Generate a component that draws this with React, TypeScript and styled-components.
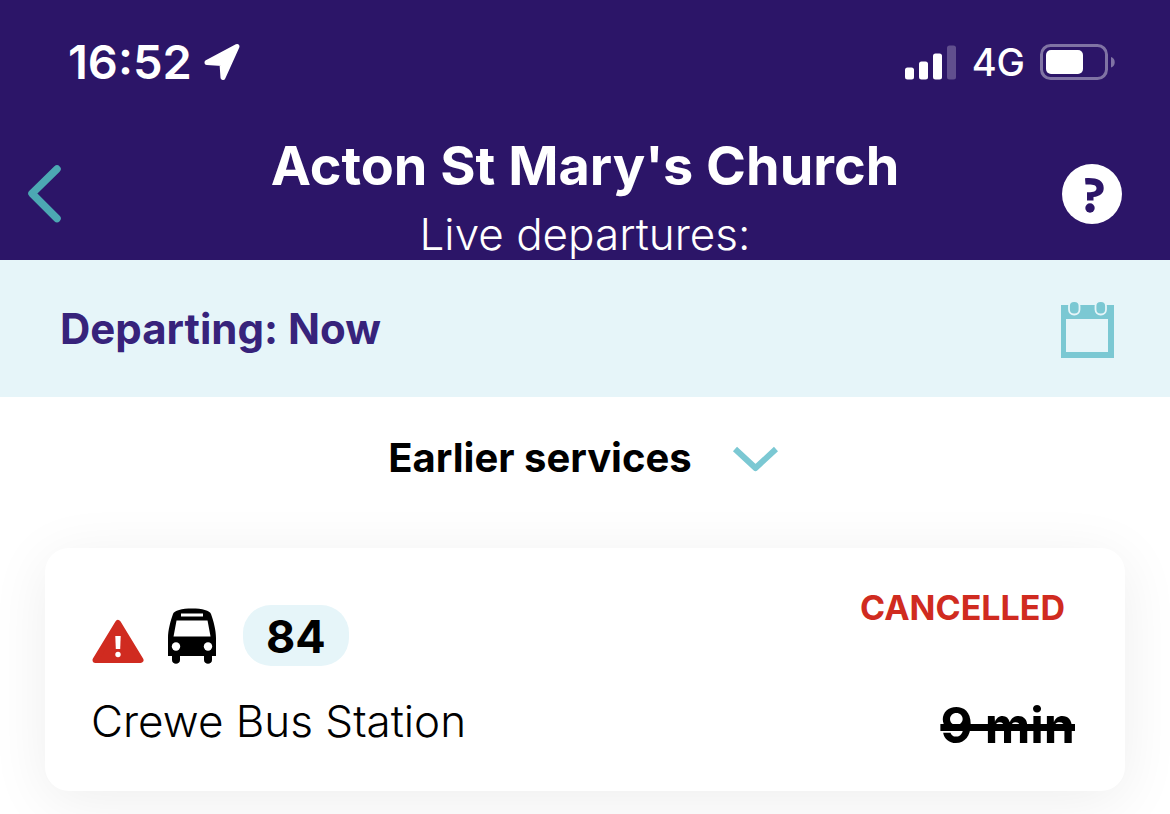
import React from "react";
import styled, { createGlobalStyle } from "styled-components";

const GlobalStyle = createGlobalStyle`
  *, *::before, *::after { box-sizing: border-box; }
  body {
    margin: 0;
    background: #fff;
    color: #000;
    font-family: Inter, "Liberation Sans", sans-serif;
  }
  h1, p { margin: 0; }
  button {
    padding: 0;
    border: 0;
    background: none;
    color: inherit;
    font: inherit;
    cursor: pointer;
  }
  svg { display: block; flex: none; }
`;

const Page = styled.div`
  min-height: 100vh;
  overflow: hidden;
`;

const Header = styled.header`
  background: #2c1568;
  color: #fff;
`;

const StatusBar = styled.div`
  display: flex;
  justify-content: space-between;
  align-items: center;
  height: 128px;
  padding: 0 54px 5px 68px;
`;

const StatusGroup = styled.div<{ $gap: number }>`
  display: flex;
  align-items: center;
  gap: ${(p) => p.$gap}px;
`;

const Clock = styled.time`
  font-size: 47px;
  font-weight: 600;
  line-height: 56px;
`;

const Network = styled.span`
  font-size: 38px;
  font-weight: 500;
  line-height: 56px;
`;

const TitleBar = styled.div`
  display: grid;
  grid-template-columns: 64px 1fr 64px;
  align-items: center;
  height: 132px;
  padding: 0 44px 0 24px;
`;

const Titles = styled.div`
  padding-left: 20px;
  text-align: center;
  white-space: nowrap;
`;

const Title = styled.h1`
  font-size: 54px;
  font-weight: 700;
  line-height: 76px;
`;

const Subtitle = styled.p`
  padding-top: 4px;
  font-size: 44px;
  font-weight: 300;
  line-height: 52px;
`;

const HelpButton = styled.button`
  display: flex;
  justify-content: center;
  align-items: center;
  width: 60px;
  height: 60px;
  border-radius: 50%;
  background: #fff;
  color: #2c1568;
`;

const DepartBar = styled.div`
  display: flex;
  justify-content: space-between;
  align-items: center;
  height: 137px;
  padding: 0 56px 0 60px;
  background: #e6f5f9;
  color: #37237b;
`;

const DepartText = styled.p`
  font-size: 42px;
  font-weight: 700;
  line-height: 48px;
`;

const Main = styled.main`
  padding: 0 45px 23px;
`;

const EarlierButton = styled.button`
  display: flex;
  justify-content: center;
  align-items: center;
  gap: 40px;
  width: 100%;
  height: 121px;
  padding-right: 4px;
  font-size: 40px;
  font-weight: 700;
`;

const Card = styled.article`
  display: flex;
  justify-content: space-between;
  height: 243px;
  margin-top: 30px;
  padding: 40px 50px 40px 46px;
  border-radius: 24px;
  background: #fff;
  box-shadow: 0 10px 60px rgba(0, 0, 0, 0.07);
`;

const CardColumn = styled.div<{ $end?: boolean }>`
  display: flex;
  flex-direction: column;
  justify-content: space-between;
  align-items: ${(p) => (p.$end ? "flex-end" : "flex-start")};
`;

const ServiceRow = styled.div`
  display: flex;
  align-items: center;
  gap: 24px;
  padding: 17px 0 0 1px;
`;

const RouteBadge = styled.span`
  margin-left: 3px;
  padding: 2px 23px 0;
  border-radius: 28px;
  background: #e6f5f9;
  font-size: 45px;
  font-weight: 700;
  line-height: 59px;
`;

const Destination = styled.p`
  font-size: 44px;
  font-weight: 300;
  line-height: 60px;
`;

const Cancelled = styled.p`
  padding-right: 10px;
  color: #d02b20;
  font-size: 34px;
  font-weight: 700;
  line-height: 40px;
`;

const Wait = styled.s`
  font-size: 50px;
  font-weight: 700;
  line-height: 52px;
  text-decoration-thickness: 7px;
`;

const LocationIcon = () => (
  <svg width="36" height="38" viewBox="0 0 36 38" aria-hidden="true">
    <path
      d="M33 3.500 L19 34.500 L18 20.500 L3 19.500 Z"
      fill="#fff"
      stroke="#fff"
      strokeWidth="5"
      strokeLinejoin="round"
    />
  </svg>
);

const SignalIcon = () => (
  <svg width="52" height="36" viewBox="0 0 52 36" fill="#fff" aria-hidden="true">
    <rect x="0" y="23.500" width="9" height="12" rx="2.500" />
    <rect x="14" y="17.500" width="9" height="18" rx="2.500" />
    <rect x="28" y="9.500" width="9" height="26" rx="2.500" />
    <rect x="42" y="1.500" width="9" height="34" rx="2.500" opacity="0.25" />
  </svg>
);

const BatteryIcon = () => (
  <svg width="76" height="36" viewBox="0 0 76 36" aria-hidden="true">
    <rect x="1.500" y="1.500" width="65" height="33" rx="9" fill="none" stroke="#8073a4" strokeWidth="3" />
    <rect x="6" y="6" width="37" height="24" rx="5" fill="#fff" />
    <path d="M71 13 C76 14.500 76 22 71 23.500 Z" fill="#8073a4" />
  </svg>
);

const BackIcon = () => (
  <svg width="41" height="60" viewBox="0 0 41 60" aria-hidden="true">
    <path
      d="M33 5 L8 29.500 L33 54.500"
      fill="none"
      stroke="#4ca8b3"
      strokeWidth="7.500"
      strokeLinecap="round"
      strokeLinejoin="round"
    />
  </svg>
);

const QuestionIcon = () => (
  <svg width="60" height="60" viewBox="0 0 60 60" aria-hidden="true">
    <path
      d="M23 14.200 C34 13.300 41.700 16 41.700 24 C41.700 29.500 38 32.300 31.500 33 V36.500 H25 V28.200 C31 28.400 34.500 27.500 34.500 24.200 C34.500 20.600 30.500 20.200 23.500 20.500 Z"
      fill="currentColor"
    />
    <circle cx="28" cy="44" r="4.700" fill="currentColor" />
  </svg>
);

const CalendarIcon = () => (
  <svg width="54" height="58" viewBox="0 0 54 58" aria-hidden="true">
    <path fillRule="evenodd" d="M1 5 H54 V58 H1 Z M6 19 V52 H48 V19 Z" fill="#7bc8d3" />
    <rect x="9" y="1" width="10.500" height="13.500" rx="5" fill="#7bc8d3" stroke="#e6f5f9" strokeWidth="1.800" />
    <rect x="35.500" y="1" width="10.500" height="13.500" rx="5" fill="#7bc8d3" stroke="#e6f5f9" strokeWidth="1.800" />
  </svg>
);

const ChevronDown = () => (
  <svg width="46" height="28" viewBox="0 0 46 28" aria-hidden="true">
    <path d="M3 5 L23.500 24 L44 5" fill="none" stroke="#7bc8d3" strokeWidth="6" strokeLinejoin="round" />
  </svg>
);

const WarningIcon = () => (
  <svg width="52" height="56" viewBox="0 0 52 56" role="img" aria-label="Warning">
    <path d="M26 15 L48.500 52 H3.500 Z" fill="#d02b20" stroke="#d02b20" strokeWidth="6" strokeLinejoin="round" />
    <path d="M23.300 28 H28.700 L28.200 41 H23.800 Z" fill="#fff" />
    <circle cx="26" cy="46.500" r="2.700" fill="#fff" />
  </svg>
);

const BusIcon = () => (
  <svg width="48" height="56" viewBox="0 0 48 56" role="img" aria-label="Bus">
    <path
      d="M5 6 C6 2.500 14 0.500 24 0.500 C34 0.500 42 2.500 43 6 C45.500 13 48 22 48 30 V48 H44 V52 C44 57 36 57 36 52 V48 H12 V52 C12 57 4 57 4 52 V48 H0 V30 C0 22 2.500 13 5 6 Z"
      fill="#000"
    />
    <rect x="13" y="5.500" width="22" height="3" fill="#fff" />
    <path d="M8.500 12.500 H39.500 L42.500 28.500 H5.500 Z" fill="#fff" />
    <circle cx="8" cy="38.500" r="4.200" fill="#fff" />
    <circle cx="40" cy="38.500" r="4.200" fill="#fff" />
  </svg>
);

export default function App() {
  return (
    <Page>
      <GlobalStyle />
      <Header>
        <StatusBar>
          <StatusGroup $gap={12}>
            <Clock>16:52</Clock>
            <LocationIcon />
          </StatusGroup>
          <StatusGroup $gap={15}>
            <SignalIcon />
            <Network>4G</Network>
            <BatteryIcon />
          </StatusGroup>
        </StatusBar>
        <TitleBar>
          <button type="button" aria-label="Back">
            <BackIcon />
          </button>
          <Titles>
            <Title>Acton St Mary's Church</Title>
            <Subtitle>Live departures:</Subtitle>
          </Titles>
          <HelpButton type="button" aria-label="Help">
            <QuestionIcon />
          </HelpButton>
        </TitleBar>
      </Header>
      <DepartBar>
        <DepartText>Departing: Now</DepartText>
        <button type="button" aria-label="Choose date">
          <CalendarIcon />
        </button>
      </DepartBar>
      <Main>
        <EarlierButton type="button">
          Earlier services
          <ChevronDown />
        </EarlierButton>
        <Card>
          <CardColumn>
            <ServiceRow>
              <WarningIcon />
              <BusIcon />
              <RouteBadge>84</RouteBadge>
            </ServiceRow>
            <Destination>Crewe Bus Station</Destination>
          </CardColumn>
          <CardColumn $end>
            <Cancelled>CANCELLED</Cancelled>
            <Wait>9 min</Wait>
          </CardColumn>
        </Card>
      </Main>
    </Page>
  );
}
